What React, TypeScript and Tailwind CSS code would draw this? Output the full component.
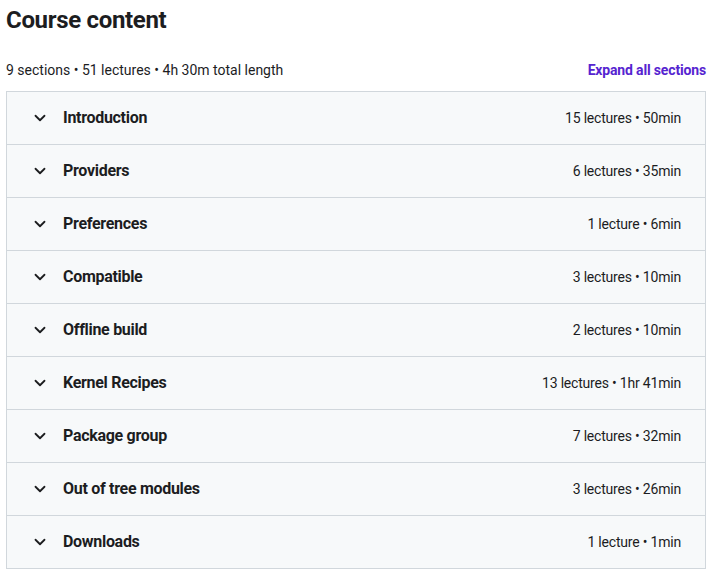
import { ChevronDown } from 'lucide-react';

const sections = [
  { title: 'Introduction', meta: '15 lectures • 50min' },
  { title: 'Providers', meta: '6 lectures • 35min' },
  { title: 'Preferences', meta: '1 lecture • 6min' },
  { title: 'Compatible', meta: '3 lectures • 10min' },
  { title: 'Offline build', meta: '2 lectures • 10min' },
  { title: 'Kernel Recipes', meta: '13 lectures • 1hr 41min' },
  { title: 'Package group', meta: '7 lectures • 32min' },
  { title: 'Out of tree modules', meta: '3 lectures • 26min' },
  { title: 'Downloads', meta: '1 lecture • 1min' },
];

export default function App() {
  return (
    <div className="bg-white pl-[6px] pr-[7px] pt-[6px] text-[#1c1d1f]" style={{ fontFamily: 'Roboto, "Liberation Sans", sans-serif' }}>
      <h2 className="text-[24px] font-bold leading-[1.2] tracking-[-0.32px]">Course content</h2>
      <div className="mt-[26px] mb-[11px] flex items-end justify-between text-[14px] leading-[1.4]">
        <span>9 sections • 51 lectures • 4h 30m total length</span>
        <button className="font-bold tracking-[-0.16px] text-[#5624d0]">Expand all sections</button>
      </div>
      <div className="border border-[#d1d7dc]">
        {sections.map((s, i) => (
          <div
            key={s.title}
            className={`flex h-[52px] items-center justify-between bg-[#f7f9fa] pl-[24px] pr-[24px] ${
              i > 0 ? 'box-content border-t border-[#d1d7dc]' : ''
            }`}
          >
            <div className="flex items-center gap-[14px]">
              <ChevronDown size={18} strokeWidth={2.4} />
              <span className="text-[16px] font-bold tracking-[-0.3px]">{s.title}</span>
            </div>
            <span className="text-[14px] tracking-[-0.2px]">{s.meta}</span>
          </div>
        ))}
      </div>
    </div>
  );
}
